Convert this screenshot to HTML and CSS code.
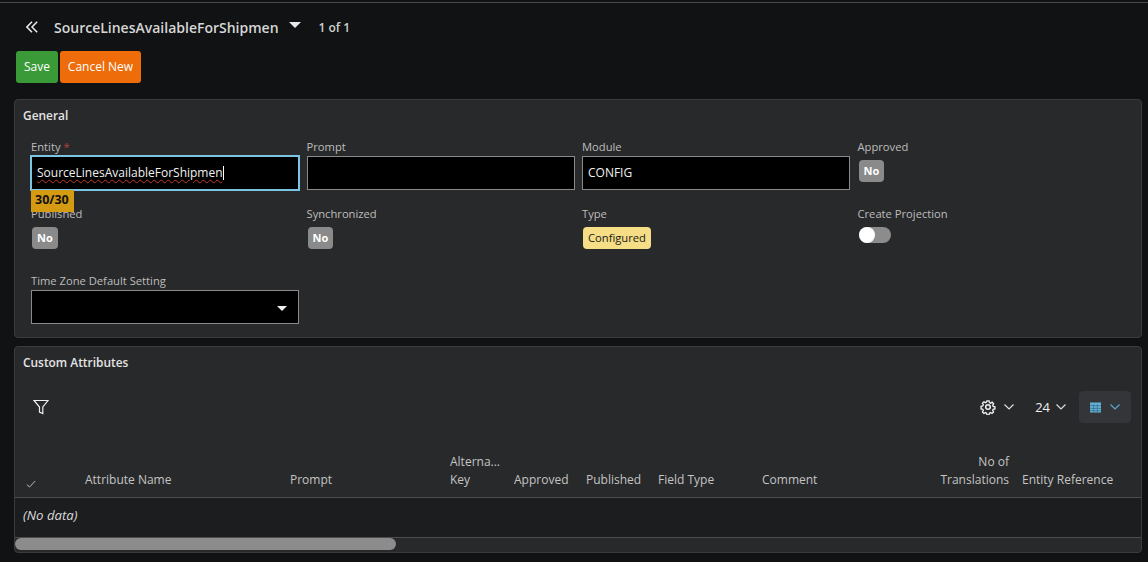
FILE: index.html
```html
<!DOCTYPE html>
<html lang="en">
<head>
<meta charset="utf-8">
<title>SourceLinesAvailableForShipmen</title>
<link rel="stylesheet" href="styles.css">
</head>
<body>
<div class="topline"></div>
<header class="titlebar">
  <svg class="back" width="12" height="12" viewBox="0 0 12 12" fill="none" stroke="#ececec" stroke-width="1.500"><path d="M6 .8.900 6 6 11.200M11.200.8 6 6l5.200 5.200"/></svg>
  <h1 class="title">SourceLinesAvailableForShipmen</h1>
  <span class="title-caret"></span>
  <span class="pager">1 of 1</span>
</header>
<div class="actions">
  <button class="btn btn-save">Save</button>
  <button class="btn btn-cancel">Cancel New</button>
</div>
<section class="panel general">
  <h2 class="panel-title">General</h2>
  <div class="form">
    <div class="field">
      <label class="lbl">Entity <span class="req">*</span></label>
      <div class="input focus"><span class="spell">SourceLinesAvailableForShipmen</span><span class="cursor"></span></div>
      <span class="counter">30/30</span>
    </div>
    <div class="field">
      <label class="lbl">Prompt</label>
      <div class="input"></div>
    </div>
    <div class="field">
      <label class="lbl">Module</label>
      <div class="input">CONFIG</div>
    </div>
    <div class="field">
      <label class="lbl">Approved</label>
      <span class="badge">No</span>
    </div>
    <div class="field">
      <label class="lbl">Published</label>
      <span class="badge">No</span>
    </div>
    <div class="field">
      <label class="lbl">Synchronized</label>
      <span class="badge">No</span>
    </div>
    <div class="field">
      <label class="lbl">Type</label>
      <span class="badge badge-yellow">Configured</span>
    </div>
    <div class="field">
      <label class="lbl">Create Projection</label>
      <span class="toggle"><span class="knob"></span></span>
    </div>
    <div class="field">
      <label class="lbl">Time Zone Default Setting</label>
      <div class="input select"><span class="select-caret"></span></div>
    </div>
  </div>
</section>
<section class="panel attrs">
  <h2 class="panel-title">Custom Attributes</h2>
  <div class="toolbar">
    <svg class="filter" width="16" height="16" viewBox="0 0 16 16" fill="none" stroke="#f0f0f0" stroke-width="1.200"><path d="M1 1.500h14L9.800 8v6.500L6.500 13V8z"/></svg>
    <div class="tools">
      <span class="tool tool-gear">
        <svg width="16" height="16" viewBox="0 0 16 16" fill="none" stroke="#f0f0f0" stroke-width="1.500"><circle cx="8" cy="8" r="2.300"/><path d="M6.800 1.200h2.400l.4 1.900 1.300.6 1.700-1 1.600 1.700-1 1.600.6 1.300 1.900.5v2.300l-1.900.5-.6 1.300 1 1.600-1.700 1.700-1.600-1-1.300.6-.4 1.900H6.800l-.4-1.900-1.300-.6-1.700 1-1.600-1.700 1-1.600-.6-1.300-1.900-.5V7.300l1.900-.5.600-1.300-1-1.600 1.700-1.700 1.600 1 1.300-.6z" transform="translate(.8 .8) scale(.9)"/></svg>
        <svg class="chev" width="12" height="8" viewBox="0 0 12 8" fill="none" stroke="#ddd" stroke-width="1.200"><path d="M1.500 1.500 6 6l4.500-4.500"/></svg>
      </span>
      <span class="tool tool-num">24
        <svg class="chev" width="12" height="8" viewBox="0 0 12 8" fill="none" stroke="#ddd" stroke-width="1.200"><path d="M1.500 1.500 6 6l4.500-4.500"/></svg>
      </span>
      <span class="tool tool-view">
        <svg class="gridicon" width="11" height="11" viewBox="0 0 12 11"><rect width="12" height="11" fill="#62b0d4"/><path d="M0 3.500h12M0 6.500h12M0 9h12M4 2v9M8 2v9" stroke="#2a5a74" stroke-width=".6"/></svg>
        <svg class="chev" width="12" height="8" viewBox="0 0 12 8" fill="none" stroke="#5ba8cc" stroke-width="1.200"><path d="M1.500 1.500 6 6l4.500-4.500"/></svg>
      </span>
    </div>
  </div>
  <div class="grid-head">
    <span class="col col-check"><svg width="10" height="8" viewBox="0 0 10 8" fill="none" stroke="#bbb" stroke-width="1"><path d="M.8 4.500 3.500 7 9.200 1"/></svg></span>
    <span class="col col-name">Attribute Name</span>
    <span class="col col-prompt">Prompt</span>
    <span class="col col-alt">Alterna...<br>Key</span>
    <span class="col col-appr">Approved</span>
    <span class="col col-pub">Published</span>
    <span class="col col-type">Field Type</span>
    <span class="col col-comment">Comment</span>
    <span class="col col-trans">No of<br>Translations</span>
    <span class="col col-ref">Entity Reference</span>
  </div>
  <div class="grid-body"><em>(No data)</em></div>
  <div class="scrolltrack"><div class="scrollthumb"></div></div>
</section>
</body>
</html>
```

FILE: styles.css
```css
* { box-sizing: border-box; }
html, body { height: 100%; }
body {
  margin: 0;
  height: 562px;
  overflow: hidden;
  background: #111214;
  color: #d8d8d8;
  font-family: "Open Sans", "Noto Sans", sans-serif;
  font-size: 12px;
}
.topline { height: 1px; margin-top: 2px; background: #4a4a4c; }
.titlebar {
  display: flex;
  align-items: center;
  height: 48px;
  padding-left: 26px;
}
.back { margin-right: 16px; }
.title {
  margin: 0;
  font-size: 14px;
  font-weight: 600;
  color: #d6d6d6;
  white-space: nowrap;
}
.title-caret {
  width: 0; height: 0;
  margin: -4px 0 0 10px;
  border-left: 6px solid transparent;
  border-right: 6px solid transparent;
  border-top: 6px solid #e8e8e8;
}
.pager { margin-left: 18px; font-weight: 600; font-size: 12px; color: #d0d0d0; }
.actions { display: flex; gap: 2px; padding-left: 16px; height: 32px; }
.btn {
  border: 0;
  border-radius: 3px;
  color: #fff;
  font: 12px "Open Sans", sans-serif;
  padding: 0 0 2px;
  white-space: nowrap;
}
.btn-save { background: #3a9a37; width: 42px; }
.btn-cancel { background: #ee6c0a; width: 81px; }
.panel {
  margin: 0 6px 0 14px;
  background: #28292b;
  border: 1px solid #3a3b3d;
  border-radius: 4px;
}
.general { margin-top: 16px; height: 239px; padding: 7px 8px 0; }
.panel-title {
  margin: 0;
  font-size: 11.900px;
  font-weight: 600;
  line-height: 16px;
  color: #e4e4e4;
}
.form {
  display: grid;
  grid-template-columns: repeat(4, 268px);
  column-gap: 7.500px;
  grid-template-rows: 66.500px 67.500px 67.500px;
  padding: 16px 0 0 8px;
}
.field { position: relative; display: flex; flex-direction: column; align-items: flex-start; }
.lbl { font-size: 11.200px; line-height: 16px; color: #bdbdbd; margin-bottom: 1px; }
.req { color: #b5433e; }
.input {
  width: 100%;
  height: 34px;
  padding: 0 5px;
  background: #000;
  border: 1px solid #8a8a8a;
  color: #f0f0f0;
  font-size: 12px;
  line-height: 32px;
  white-space: nowrap;
  display: flex;
  align-items: center;
}
.input.focus {
  width: calc(100% + 2px);
  height: 36px;
  margin: -1px -1px;
  border: 2px solid #7cc4e4;
  padding: 0 5px;
}
.spell {
  text-decoration: underline wavy #c0392b 1px;
  text-underline-offset: 2px;
}
.cursor { width: 1px; height: 14px; background: #fff; }
.counter {
  position: absolute;
  left: 0; top: 51px;
  width: 43px; height: 22px;
  padding-left: 4px;
  background: #d39a12;
  color: #111;
  font-size: 12.500px;
  font-weight: 700;
  line-height: 20px;
  z-index: 2;
}
.badge {
  margin: 4px 0 0 1px;
  height: 22px;
  padding: 0 5px;
  border-radius: 4px;
  background: #8a8a8a;
  color: #fff;
  font-size: 11px;
  font-weight: 700;
  line-height: 22px;
}
.badge-yellow {
  background: #f5de85;
  color: #1a1a1a;
  font-size: 11.200px;
  font-weight: 500;
  padding: 0 5px;
}
.toggle {
  position: relative;
  margin: 4px 0 0 1px;
  width: 32px; height: 16px;
  border-radius: 8px;
  background: #8c8c8c;
}
.knob {
  position: absolute;
  left: 0; top: 0;
  width: 16px; height: 16px;
  border-radius: 50%;
  background: #fff;
}
.select { position: relative; }
.select-caret {
  position: absolute;
  right: 11px; top: 15px;
  border-left: 5px solid transparent;
  border-right: 5px solid transparent;
  border-top: 5px solid #f0f0f0;
}
.attrs { margin-top: 8px; height: 207px; position: relative; }
.attrs .panel-title { padding: 7px 8px 0; }
.toolbar {
  display: flex;
  align-items: center;
  justify-content: space-between;
  height: 32px;
  margin-top: 21px;
  padding: 0 10px 0 18px;
}
.tools { display: flex; align-items: center; }
.tool { display: flex; align-items: center; gap: 8px; color: #eee; font-size: 13px; }
.tool-gear { gap: 7px; }
.tool-num { margin-left: 20px; gap: 5px; }
.tool-view {
  margin-left: 12px;
  width: 52px; height: 32px;
  justify-content: center;
  background: #333538;
  border-radius: 4px;
}
.gridicon { margin-left: 1px; }
.grid-head {
  position: relative;
  height: 65px;
  margin-top: 10px;
  border-bottom: 1px solid #4c4d4f;
}
.col {
  position: absolute;
  bottom: 8px;
  font-size: 12px;
  line-height: 18px;
  color: #c4c4c4;
  white-space: nowrap;
}
.col-check { left: 11px; bottom: 8px; line-height: 10px; }
.col-name { left: 70px; }
.col-prompt { left: 275px; }
.col-alt { left: 435px; }
.col-appr { left: 499px; }
.col-pub { left: 571px; }
.col-type { left: 643px; }
.col-comment { left: 747px; }
.col-trans { right: 132px; text-align: right; }
.col-ref { left: 1007px; }
.grid-body {
  height: 40px;
  padding: 0 8px;
  background: #1c1d1f;
  line-height: 35px;
  font-size: 13.200px;
  color: #dcdcdc;
  border-bottom: 1px solid #4c4d4f;
}
.scrolltrack { height: 14px; padding-top: 0; }
.scrollthumb { width: 381px; height: 12px; border-radius: 6px; background: #8c8c8c; }
```
